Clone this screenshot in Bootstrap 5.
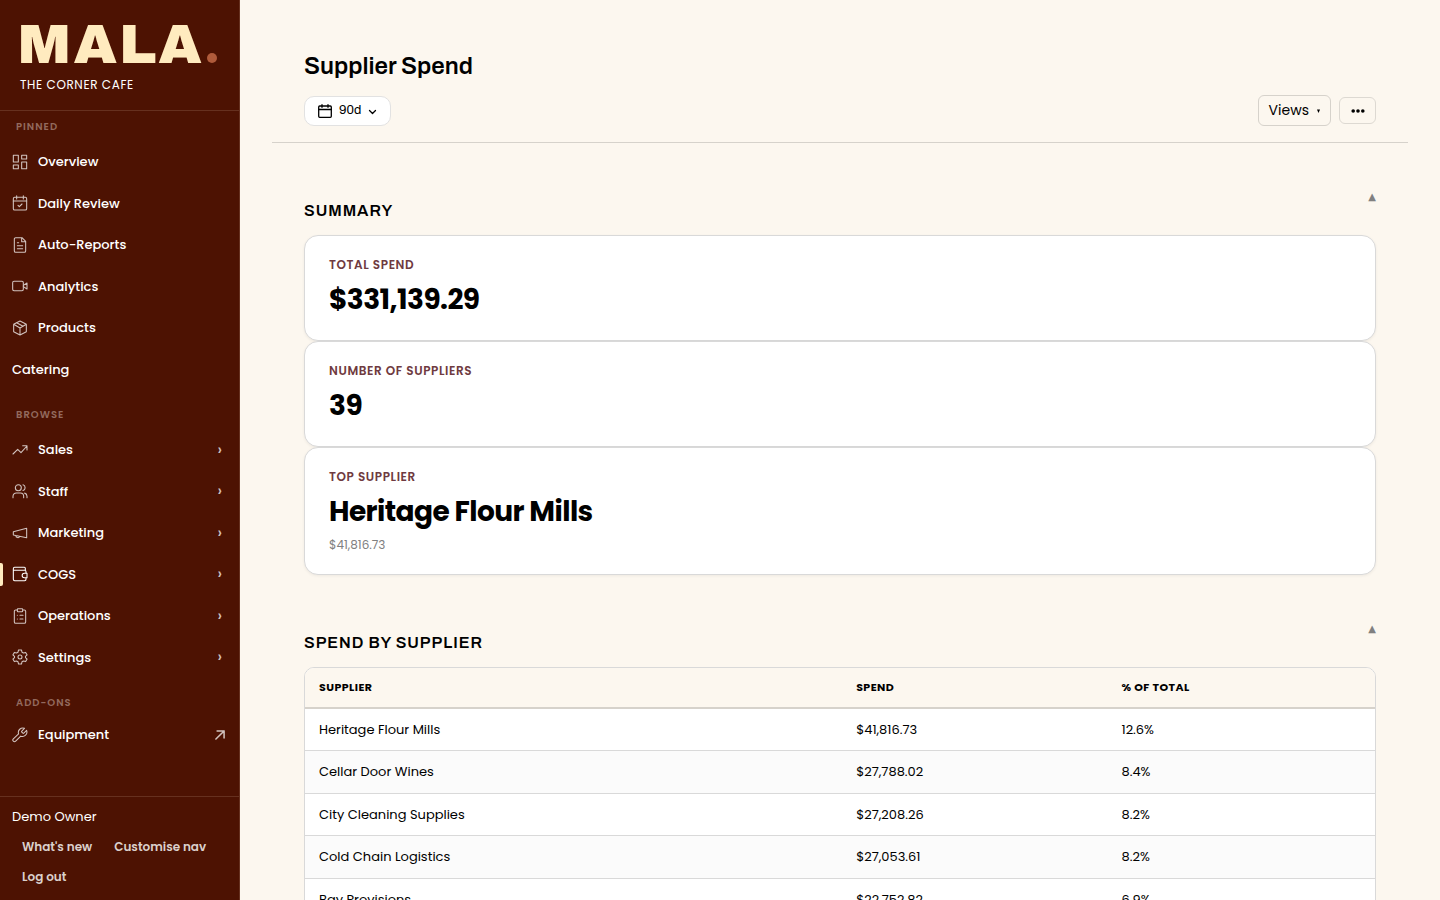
<!DOCTYPE html>
<html lang="en">
<head>
<meta charset="utf-8">
<meta name="viewport" content="width=device-width, initial-scale=1">
<title>Supplier Spend – Mala</title>
<link href="https://cdn.jsdelivr.net/npm/bootstrap@5.3.0/dist/css/bootstrap.min.css" rel="stylesheet">
<style>
:root{--maroon:#4d1202;--cream:#fcf7ef;--butter:#ffebbf;--line:#d9d9d9}
body{font-family:Poppins,Inter,"Open Sans",sans-serif;font-size:13px;line-height:1.5;color:#000;background:var(--cream);-webkit-font-smoothing:antialiased}
.side{width:240px;background:var(--maroon);color:#fff;border-right:1px solid #66301f}
.brand-box{height:111px;padding:17px 17px 0;border-bottom:1px solid #66301f}
.wordmark{font-family:Archivo,Inter,sans-serif;font-weight:900;font-size:56px;line-height:56px;letter-spacing:2px;color:var(--butter)}
.wordmark-dot{width:10px;height:10px;background:#b05b3b;margin:0 0 10px 3px}
.venue{font-size:12px;line-height:18px;letter-spacing:.05em;margin:3px 3px 0}
.group-title{font-size:10px;line-height:15px;font-weight:600;letter-spacing:1px;color:#936a5e;padding:16px 16px 8px}
.group-title.first{padding-top:8px}
.group-title.last{padding-bottom:5px}
.side-link{display:flex;align-items:center;gap:10px;padding:10px 12px;margin-bottom:2px;color:#fff;text-decoration:none;font-weight:500;position:relative}
.side-link svg{width:16px;height:16px;stroke-width:1.6;opacity:.75;flex:none}
.side-link .out{stroke-width:2.6;width:14px}
.side-link .chev{margin-left:auto;padding-right:5px;font-size:15px;line-height:18px;opacity:.75}
.side-link.active svg{opacity:1}
.side-link.active::before{content:"";position:absolute;left:0;top:8px;bottom:8px;width:3px;border-radius:0 2px 2px 0;background:var(--butter)}
svg{fill:none;stroke:currentColor;stroke-width:1.5;stroke-linecap:round;stroke-linejoin:round}
.side-foot{border-top:1px solid #66301f;padding:10px 12px 8px}
.foot-btns{column-gap:2px;margin-top:6px}
.foot-btn{border:0;background:none;color:#dbd0cc;font-size:12px;line-height:18px;font-weight:600;padding:6px 10px}
.content-area{padding:48px 32px;scrollbar-width:none}
.page-head{padding:0 32px 16px;border-bottom:1px solid #d6d2cb}
.page-title{font-family:Archivo,Inter,sans-serif;font-size:24px;line-height:36px;font-weight:600;margin:0 0 11px}
.range-btn{height:30px;gap:7px;padding:1px 13px 0;border:1px solid #e2e2e2;border-radius:10px;background:#fff;font-family:Archivo,sans-serif;font-size:13px;color:#000}
.range-btn svg{stroke-width:1.3}
.view-btn{height:31px;padding:0 10px;border:1px solid #d6d2cb;border-radius:6px;background:none;font-size:14px;color:#000}
.more-btn{height:27px;width:37px;padding:0;border:1px solid #ddd9d2;border-radius:6px;background:none}
.block{padding:48px 32px 0}
.block-top{margin-bottom:12px}
.block-head{font-family:Archivo,Inter,sans-serif;font-size:16px;line-height:24px;font-weight:600;letter-spacing:.06em;margin:0;padding-top:8px}
.fold-btn{border:0;background:none;padding:0;color:#808080;font-family:"DejaVu Sans",sans-serif;font-size:10px;line-height:12px}
.stat{border:1px solid var(--line);border-radius:14px;background:#fff;padding:20px 24px;box-shadow:0 1px 3px rgba(0,0,0,.06)}
.stat-label{font-size:12px;line-height:18px;font-weight:600;letter-spacing:.05em;color:#6f3a40}
.stat-value{font-size:28px;line-height:42px;font-weight:700;letter-spacing:-.02em;margin-top:5px;margin-bottom:-1px}
.stat-note{font-size:12px;line-height:18px;color:#808080;margin-top:4px}
.grid-wrap{border:1px solid var(--line);border-radius:10px;overflow:hidden;background:#fff}
.spend{width:100%;border-collapse:separate;border-spacing:0;table-layout:fixed}
.spend th{background:var(--cream);font-size:11px;font-weight:700;letter-spacing:.04em;padding:11px 14px;border-bottom:2px solid #d6d2cb}
.spend td{padding:11px 14px;border-bottom:1px solid var(--line)}
.spend tbody tr:nth-child(even){background:#fbfbfb}
.c1{width:50.2%}.c2{width:24.8%}
</style>
</head>
<body>
<div class="d-flex vh-100 overflow-hidden">
<aside class="side d-flex flex-column flex-shrink-0">
  <div class="brand-box">
    <div class="d-flex align-items-end"><span class="wordmark">MALA</span><span class="wordmark-dot rounded-circle"></span></div>
    <div class="venue">THE CORNER CAFE</div>
  </div>
  <nav class="flex-grow-1 overflow-hidden">
    <div class="group-title first">PINNED</div>
    <a class="side-link" href="#"><svg viewBox="0 0 24 24"><path d="M2 2h7.500v10H2zM14.500 2H22v5.500h-7.500zM14.500 12H22v10h-7.500zM2 16.500h7.500V22H2z"/></svg>Overview</a>
    <a class="side-link" href="#"><svg viewBox="0 0 24 24"><path d="M7 1v5M17 1v5M2 9h20"/><rect x="2" y="3.500" width="20" height="19" rx="2"/><path d="m9 15.500 2 2 4-4"/></svg>Daily Review</a>
    <a class="side-link" href="#"><svg viewBox="0 0 24 24"><path d="M15 1H5.500a2 2 0 0 0-2 2v18a2 2 0 0 0 2 2h13a2 2 0 0 0 2-2V6.500zM14.500 1v6h6M8 8.500h2M8 13h8M8 17.500h8"/></svg>Auto-Reports</a>
    <a class="side-link" href="#"><svg viewBox="0 0 24 24"><rect x="1" y="5" width="16" height="14" rx="2"/><path d="m17 11 5.500-3.500v9L17 13"/></svg>Analytics</a>
    <a class="side-link" href="#"><svg viewBox="0 0 24 24"><path d="M12 1.500 2.500 6.500v11L12 22.500l9.500-5v-11zM2.500 6.500 12 12l9.500-5.500M12 12v10.500M7 4l9.500 5.500"/></svg>Products</a>
    <a class="side-link" href="#">Catering</a>
    <div class="group-title">BROWSE</div>
    <a class="side-link" href="#"><svg viewBox="0 0 24 24"><path d="m1.500 18 7-7 5 5 9-10M16 5.500h6.500V12"/></svg>Sales<span class="chev">›</span></a>
    <a class="side-link" href="#"><svg viewBox="0 0 24 24"><circle cx="9.500" cy="7" r="4.500"/><path d="M1.500 22v-2a5 5 0 0 1 5-5h6a5 5 0 0 1 5 5v2M16.500 2.700a4.500 4.500 0 0 1 0 8.600M19 15.200a5 5 0 0 1 3.500 4.800v2"/></svg>Staff<span class="chev">›</span></a>
    <a class="side-link" href="#"><svg viewBox="0 0 24 24"><path d="m2 10 20-5v14L2 15zM11.500 17.300a3 3 0 0 1-5.700-1.500"/></svg>Marketing<span class="chev">›</span></a>
    <a class="side-link active" href="#" aria-current="page"><svg viewBox="0 0 24 24"><path d="M20 6.500V3.500A1.500 1.500 0 0 0 18.500 2H4a2 2 0 0 0-2 2v16a2 2 0 0 0 2 2h15a2 2 0 0 0 2-2v-2.500M2 6.500h17a2 2 0 0 1 2 2V11M22.500 11h-4a3.200 3.200 0 0 0 0 6.500h4z"/></svg>COGS<span class="chev">›</span></a>
    <a class="side-link" href="#"><svg viewBox="0 0 24 24"><rect x="8" y="1" width="8" height="4.500" rx="1"/><path d="M16 3h2.500a2 2 0 0 1 2 2v16a2 2 0 0 1-2 2h-13a2 2 0 0 1-2-2V5a2 2 0 0 1 2-2H8M12 11h4.500M12 16.500h4.500M8 11h.01M8 16.500h.01"/></svg>Operations<span class="chev">›</span></a>
    <a class="side-link" href="#"><svg viewBox="0 0 24 24"><path d="M9.800 1.500h4.400l.8 3.300 2.200 1.300 3.300-1 2.200 3.800-2.500 2.300v1.600l2.500 2.300-2.200 3.800-3.300-1-2.200 1.300-.8 3.300H9.800L9 19.200l-2.200-1.300-3.300 1-2.200-3.800 2.500-2.300v-1.600L1.300 8.900l2.200-3.800 3.300 1L9 4.800z"/><circle cx="12" cy="12" r="3"/></svg>Settings<span class="chev">›</span></a>
    <div class="group-title last">ADD-ONS</div>
    <a class="side-link" href="#"><svg viewBox="0 0 24 24"><path d="M14.700 6.300a1 1 0 0 0 0 1.400l1.600 1.600a1 1 0 0 0 1.400 0l4.200-4.200a6.700 6.700 0 0 1-8.800 8.600L5.500 21.300a2.400 2.400 0 0 1-3.500-3.500l7.900-7.400A6.700 6.700 0 0 1 18.700 2z"/></svg>Equipment<svg class="out ms-auto" viewBox="0 0 24 24"><path d="M5 19 19 5M7 5h12v12"/></svg></a>
  </nav>
  <div class="side-foot">
    <div>Demo Owner</div>
    <div class="foot-btns d-flex flex-wrap"><button class="foot-btn" type="button">What's new</button><button class="foot-btn" type="button">Customise nav</button><button class="foot-btn" type="button">Log out</button></div>
  </div>
</aside>
<main class="content-area flex-grow-1 overflow-auto">
  <header class="page-head">
    <h1 class="page-title">Supplier Spend</h1>
    <div class="d-flex align-items-center justify-content-between">
      <button class="range-btn d-flex align-items-center" type="button"><svg width="14" height="14" viewBox="0 0 14 14"><rect x=".7" y="2" width="12.600" height="11.300" rx="1"/><path d="M.7 5.500h12.600M4 .7v2.600M10 .7v2.600"/></svg>90d<svg width="9" height="9" viewBox="0 0 9 9"><path d="m1.500 3.500 3 3 3-3"/></svg></button>
      <div class="d-flex align-items-center gap-2">
        <button class="view-btn d-flex align-items-center gap-2" type="button">Views<svg width="3" height="4" viewBox="0 0 3 4"><path d="M0 .5h3L1.500 4z" fill="#000" stroke="none"/></svg></button>
        <button class="more-btn d-flex align-items-center justify-content-center" type="button" aria-label="More actions"><svg width="14" height="4" viewBox="0 0 14 4"><g fill="#000" stroke="none"><circle cx="2.200" cy="2" r="1.800"/><circle cx="7" cy="2" r="1.800"/><circle cx="11.800" cy="2" r="1.800"/></g></svg></button>
      </div>
    </div>
  </header>
  <section class="block">
    <div class="block-top d-flex justify-content-between align-items-start"><h2 class="block-head">SUMMARY</h2><button class="fold-btn" type="button" aria-label="Collapse summary">▲</button></div>
    <div class="stat"><div class="stat-label">TOTAL SPEND</div><div class="stat-value">$331,139.29</div></div>
    <div class="stat"><div class="stat-label">NUMBER OF SUPPLIERS</div><div class="stat-value">39</div></div>
    <div class="stat"><div class="stat-label">TOP SUPPLIER</div><div class="stat-value">Heritage Flour Mills</div><div class="stat-note">$41,816.73</div></div>
  </section>
  <section class="block">
    <div class="block-top d-flex justify-content-between align-items-start"><h2 class="block-head">SPEND BY SUPPLIER</h2><button class="fold-btn" type="button" aria-label="Collapse spend by supplier">▲</button></div>
    <div class="grid-wrap">
      <table class="spend">
        <thead><tr><th class="c1" scope="col">SUPPLIER</th><th class="c2" scope="col">SPEND</th><th scope="col">% OF TOTAL</th></tr></thead>
        <tbody>
          <tr><td>Heritage Flour Mills</td><td>$41,816.73</td><td>12.6%</td></tr>
          <tr><td>Cellar Door Wines</td><td>$27,788.02</td><td>8.4%</td></tr>
          <tr><td>City Cleaning Supplies</td><td>$27,208.26</td><td>8.2%</td></tr>
          <tr><td>Cold Chain Logistics</td><td>$27,053.61</td><td>8.2%</td></tr>
          <tr><td>Bay Provisions</td><td>$22,752.82</td><td>6.9%</td></tr>
        </tbody>
      </table>
    </div>
  </section>
</main>
</div>
<script src="https://cdn.jsdelivr.net/npm/bootstrap@5.3.0/dist/js/bootstrap.bundle.min.js"></script>
</body>
</html>
